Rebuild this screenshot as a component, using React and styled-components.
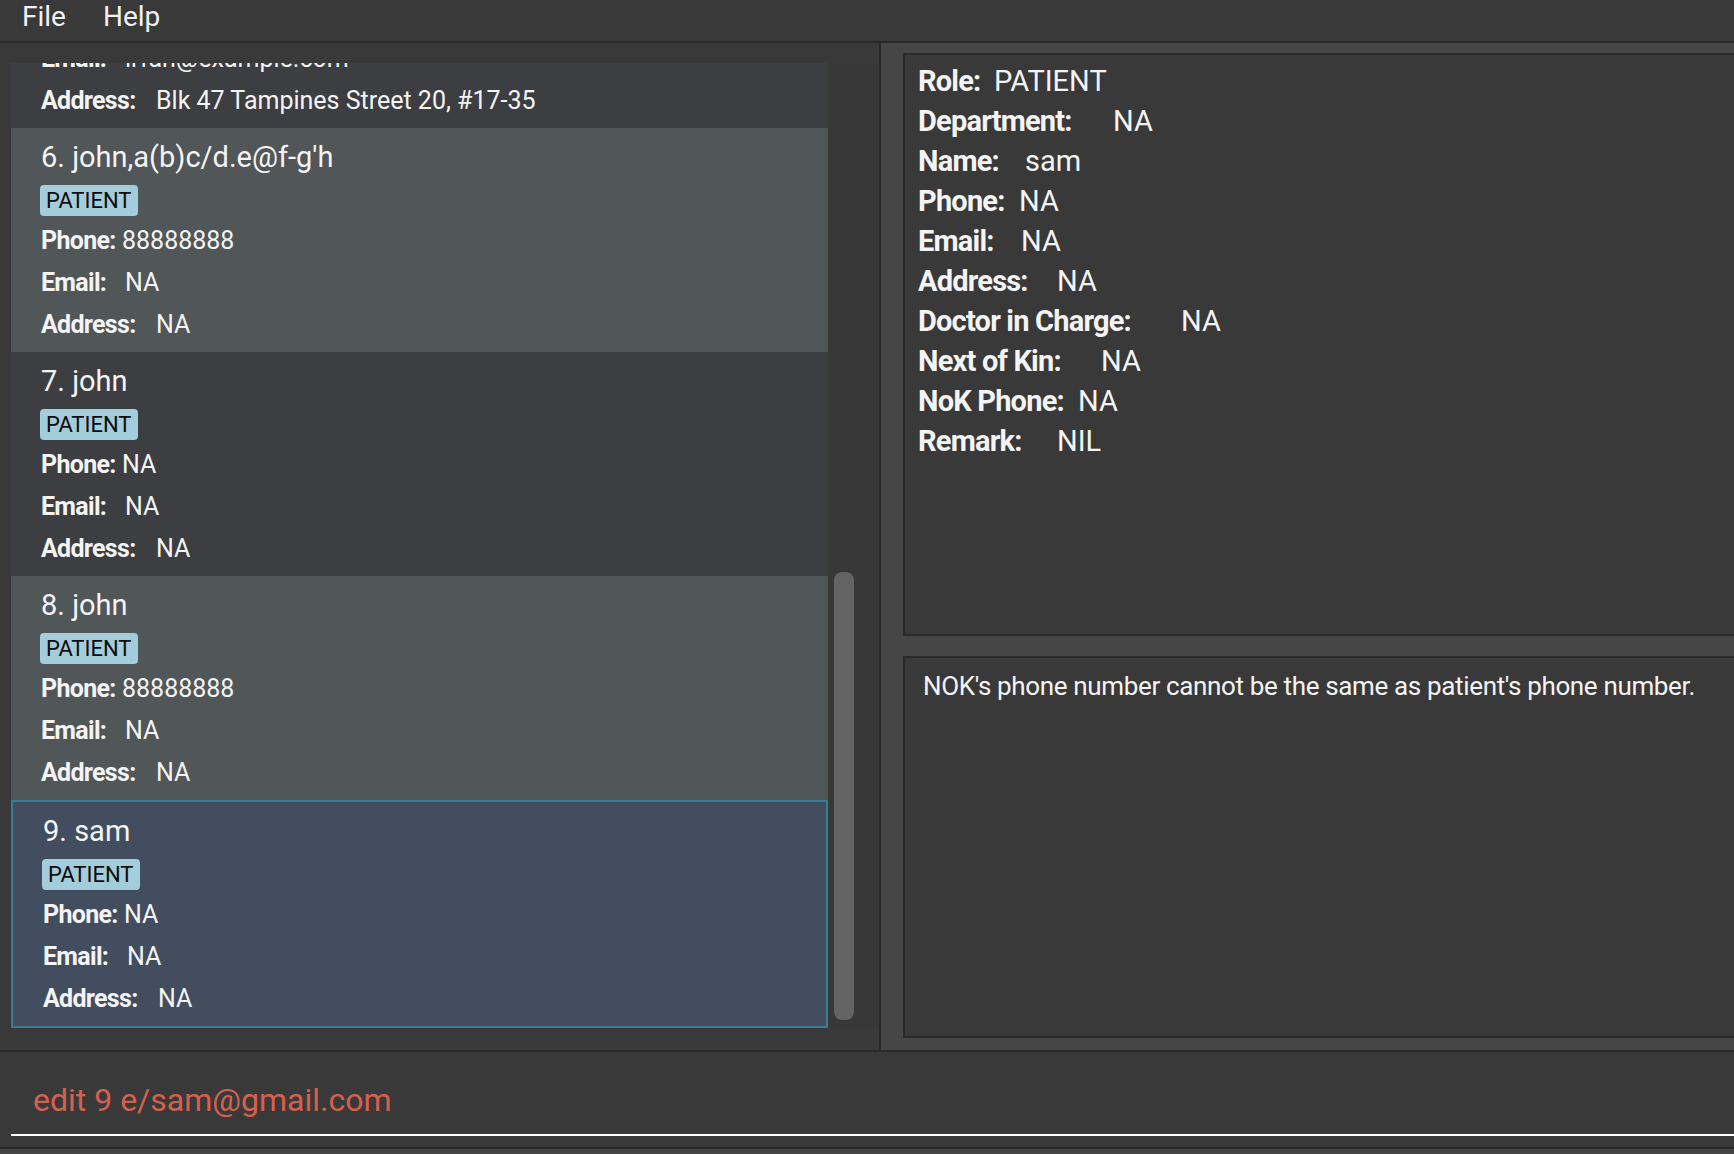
import React from 'react';
import styled, { createGlobalStyle } from 'styled-components';

const GlobalStyle = createGlobalStyle`
	html, body {
		margin: 0;
		padding: 0;
		background: #393939;
		overflow: hidden;
	}
	* {
		box-sizing: border-box;
	}
`;

const persons = [
	{ index: 5, name: 'Irfan Ibrahim', phone: '92492021', email: 'irfan@example.com', address: 'Blk 47 Tampines Street 20, #17-35' },
	{ index: 6, name: "john,a(b)c/d.e@f-g'h", phone: '88888888', email: 'NA', address: 'NA' },
	{ index: 7, name: 'john', phone: 'NA', email: 'NA', address: 'NA' },
	{ index: 8, name: 'john', phone: '88888888', email: 'NA', address: 'NA' },
	{ index: 9, name: 'sam', phone: 'NA', email: 'NA', address: 'NA', selected: true }
];

// valueAt: where the value column starts, measured from the label's left edge
const details = [
	{ label: 'Role:', value: 'PATIENT', valueAt: 76 },
	{ label: 'Department:', value: 'NA', valueAt: 195 },
	{ label: 'Name:', value: 'sam', valueAt: 107 },
	{ label: 'Phone:', value: 'NA', valueAt: 101 },
	{ label: 'Email:', value: 'NA', valueAt: 103 },
	{ label: 'Address:', value: 'NA', valueAt: 139 },
	{ label: 'Doctor in Charge:', value: 'NA', valueAt: 263 },
	{ label: 'Next of Kin:', value: 'NA', valueAt: 183 },
	{ label: 'NoK Phone:', value: 'NA', valueAt: 160 },
	{ label: 'Remark:', value: 'NIL', valueAt: 139 }
];

export default function App() {
	return (
		<>
			<GlobalStyle />
			<Window>
				<MenuBar>
					<MenuItem>File</MenuItem>
					<MenuItem>Help</MenuItem>
				</MenuBar>
				<Main>
					<ListPanel>
						<ListView>
							<Cards>
								<CardsInner>
									{persons.map((p) => (
										<Card key={p.index} $odd={p.index % 2 === 1} $selected={p.selected}>
											<Name>{`${p.index}. ${p.name}`}</Name>
											<Tag>PATIENT</Tag>
											<Field $valueAt={81}>
												<b>Phone:</b>
												<span>{p.phone}</span>
											</Field>
											<Field $valueAt={84}>
												<b>Email:</b>
												<span>{p.email}</span>
											</Field>
											<Field $valueAt={115}>
												<b>Address:</b>
												<span>{p.address}</span>
											</Field>
										</Card>
									))}
								</CardsInner>
							</Cards>
							<ScrollTrack>
								<ScrollThumb />
							</ScrollTrack>
						</ListView>
					</ListPanel>
					<SidePanel>
						<DetailBox>
							{details.map((d) => (
								<DetailRow key={d.label} $valueAt={d.valueAt}>
									<b>{d.label}</b>
									<span>{d.value}</span>
								</DetailRow>
							))}
						</DetailBox>
						<ResultBox>NOK's phone number cannot be the same as patient's phone number.</ResultBox>
					</SidePanel>
				</Main>
				<CommandArea>
					<CommandBox>edit 9 e/sam@gmail.com</CommandBox>
				</CommandArea>
				<StatusBar />
			</Window>
		</>
	);
}

const Window = styled.div`
	display: flex;
	flex-direction: column;
	width: 1734px;
	height: 1154px;
	background: #393939;
	font-family: Roboto, 'Liberation Sans', sans-serif;
	color: #f4f4f4;
	overflow: hidden;
`;

const MenuBar = styled.div`
	display: flex;
	align-items: center;
	gap: 37px;
	height: 43px;
	padding: 0 0 7px 22px;
	background: #393939;
	border-bottom: 2px solid #2a2a2a;
`;

const MenuItem = styled.span`
	font-size: 28px;
	line-height: 32px;
	color: #f2f2f2;
`;

const Main = styled.div`
	display: flex;
	height: 1009px;
	border-bottom: 2px solid #2a2a2a;
`;

const ListPanel = styled.div`
	width: 881px;
	padding: 20px 0 20px 11px;
	background: #393939;
	border-right: 2px solid #2a2a2a;
`;

const ListView = styled.div`
	display: flex;
	height: 965px;
`;

const Cards = styled.div`
	width: 818px;
	height: 100%;
	overflow: hidden;
`;

/* list is scrolled to its end: card 5 is mostly above the viewport */
const CardsInner = styled.div`
	margin-top: -159px;
`;

const Card = styled.div`
	height: ${(props) => (props.$selected ? 228 : 224)}px;
	padding: 9px 0 0 30px;
	background: ${(props) => (props.$selected ? '#424d5f' : props.$odd ? '#3c3e41' : '#515658')};
	border: ${(props) => (props.$selected ? '2px solid #3b7c95' : 'none')};
`;

const Name = styled.div`
	font-size: 29px;
	line-height: 40px;
	color: #f4f4f4;
`;

const Tag = styled.div`
	display: inline-flex;
	align-items: center;
	height: 31px;
	margin: 8px 0 4px -1px;
	padding: 0 6px;
	border-radius: 4px;
	background: #a4cddc;
	color: #0c0c0c;
	font-size: 22px;
`;

const Field = styled.div`
	display: flex;
	font-size: 25px;
	line-height: 42px;
	b {
		flex-shrink: 0;
		width: ${(props) => props.$valueAt}px;
		font-weight: 700;
		letter-spacing: -0.7px;
	}
`;

const ScrollTrack = styled.div`
	display: flex;
	flex-direction: column;
	justify-content: flex-end;
	padding: 0 0 8px 6px;
	width: 51px;
	background: #383838;
`;

const ScrollThumb = styled.div`
	width: 20px;
	height: 448px;
	border-radius: 8px;
	background: #636363;
`;

const SidePanel = styled.div`
	flex: 1;
	display: flex;
	flex-direction: column;
	gap: 20px;
	padding: 10px 0 12px 22px;
	background: #464646;
`;

const Box = styled.div`
	background: #393939;
	border: 2px solid #2a2a2a;
	border-right: none;
`;

const DetailBox = styled(Box)`
	height: 583px;
	padding: 6px 0 0 13px;
`;

const DetailRow = styled.div`
	display: flex;
	font-size: 29px;
	line-height: 40px;
	b {
		flex-shrink: 0;
		width: ${(props) => props.$valueAt}px;
		font-weight: 700;
		letter-spacing: -0.8px;
	}
`;

const ResultBox = styled(Box)`
	flex: 1;
	padding: 11px 0 0 18px;
	font-size: 26px;
	line-height: 34px;
	letter-spacing: -0.35px;
`;

const CommandArea = styled.div`
	height: 97px;
	padding: 0 0 11px 11px;
	background: #393939;
	border-bottom: 2px solid #2a2a2a;
`;

const CommandBox = styled.div`
	height: 84px;
	padding: 30px 0 0 22px;
	border-bottom: 2px solid #ffffff;
	color: #d6604e;
	font-size: 32px;
	line-height: 36px;
`;

const StatusBar = styled.div`
	flex: 1;
	background: #454545;
`;
